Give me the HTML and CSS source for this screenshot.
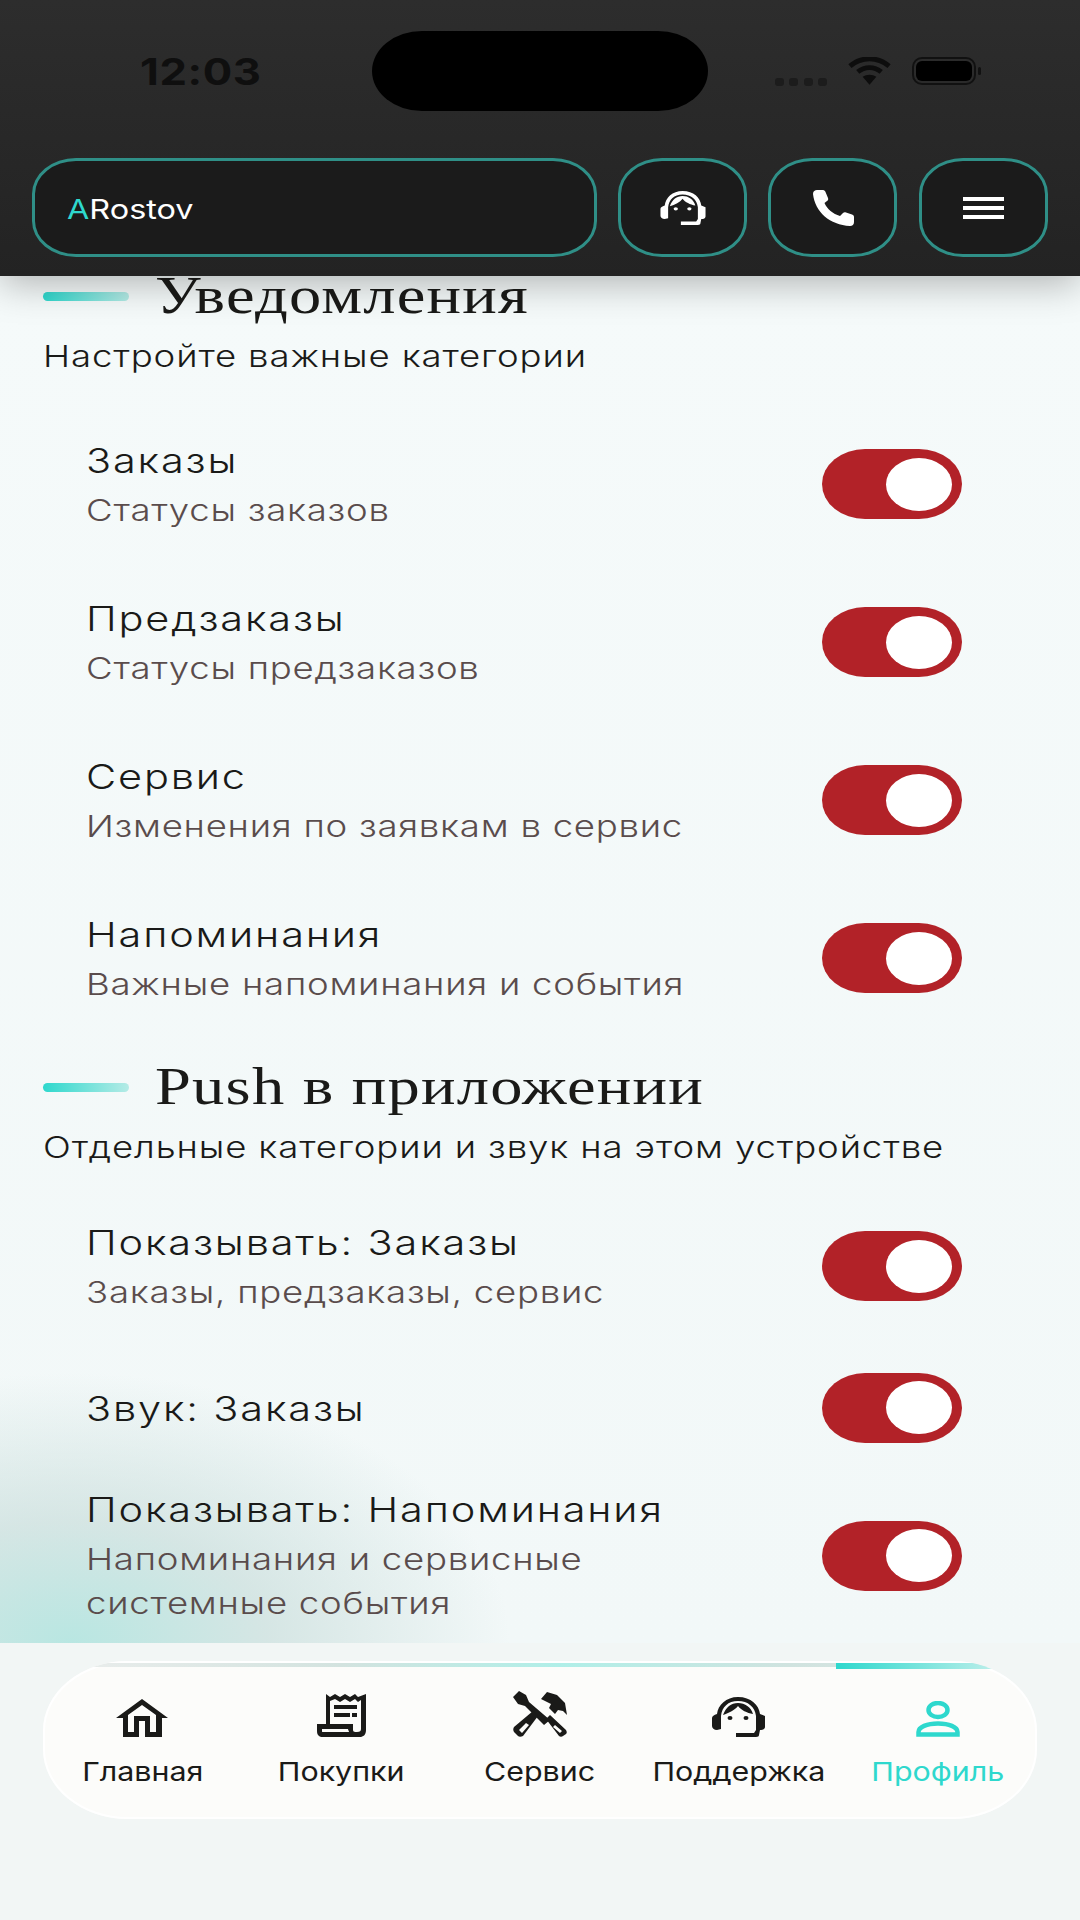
FILE: index.html
```html
<!DOCTYPE html>
<html lang="ru">
<head>
    <meta charset="UTF-8">
    <meta name="viewport" content="width=device-width, initial-scale=1.0">
    <title>Профиль | Уведомления</title>
    <link rel="stylesheet" href="styles.css">
</head>
<body>
    <div class="app">
        <!-- Шапка -->
        <header class="top">
            <div class="status">
                <span class="time">12:03</span>
                <div class="island"></div>
                <div class="status-icons">
                    <svg class="signal" width="52" height="8" viewBox="0 0 52 8"><g fill="#1c1c1c"><rect x="0" y="0" width="9" height="8" rx="3"/><rect x="14" y="0" width="9" height="8" rx="3"/><rect x="29" y="0" width="9" height="8" rx="3"/><rect x="43" y="0" width="9" height="8" rx="3"/></g></svg>
                    <svg width="45" height="28" viewBox="0 0 46 28"><g fill="none" stroke="#0d0d0d" stroke-width="5"><path d="M3 9 C15 -1 31 -1 43 9"/><path d="M11 15 C18 9 28 9 35 15"/></g><path d="M16 20 C20 17 26 17 30 20 L23 28 Z" fill="#0d0d0d"/></svg>
                    <svg width="72" height="28" viewBox="0 0 72 28"><rect x="1" y="1" width="62" height="26" rx="9" fill="none" stroke="#111" stroke-width="2"/><rect x="4" y="4" width="56" height="20" rx="6" fill="#000"/><rect x="66" y="10" width="3" height="8" rx="1.5" fill="#111"/></svg>
                </div>
            </div>
            <div class="toolbar">
                <div class="brand-box"><span class="brand"><span class="brand-a">A</span>Rostov</span></div>
                <button class="tool-btn">
                    <svg width="46" height="34" viewBox="0 0 53 40"><use href="#ic-support"/></svg>
                </button>
                <button class="tool-btn">
                    <svg width="42" height="36" viewBox="0 0 42 36"><path d="M1 4 C1 1 3 0 5 0 L11 0 C12.500 0 13 1 13.500 2 L16 8 C16.500 9.500 16 10.500 15 11 L12.500 13 C15 19 21 24 28 26 L31 23 C32 22 33 22 34 22.500 L40 24.500 C41.500 25 42 26 42 27 L42 32 C42 34.500 40.500 36 38 36 C18 35 3 22 1 4 Z" fill="#fff"/></svg>
                </button>
                <button class="tool-btn burger">
                    <i></i><i></i><i></i>
                </button>
            </div>
        </header>

        <main class="content">
            <section class="group">
                <div class="group-head">
                    <span class="dash"></span>
                    <h2>Уведомления</h2>
                </div>
                <p class="group-sub">Настройте важные категории</p>

                <div class="rows rows-first">
                    <div class="row row-std">
                        <div class="row-text">
                            <div class="row-title">Заказы</div>
                            <div class="row-sub">Статусы заказов</div>
                        </div>
                        <span class="toggle"><span class="knob"></span></span>
                    </div>
                    <div class="row row-std">
                        <div class="row-text">
                            <div class="row-title">Предзаказы</div>
                            <div class="row-sub">Статусы предзаказов</div>
                        </div>
                        <span class="toggle"><span class="knob"></span></span>
                    </div>
                    <div class="row row-std">
                        <div class="row-text">
                            <div class="row-title">Сервис</div>
                            <div class="row-sub">Изменения по заявкам в сервис</div>
                        </div>
                        <span class="toggle"><span class="knob"></span></span>
                    </div>
                    <div class="row row-std">
                        <div class="row-text">
                            <div class="row-title">Напоминания</div>
                            <div class="row-sub">Важные напоминания и события</div>
                        </div>
                        <span class="toggle"><span class="knob"></span></span>
                    </div>
                </div>
            </section>

            <section class="group group-push">
                <div class="group-head">
                    <span class="dash"></span>
                    <h2>Push в приложении</h2>
                </div>
                <p class="group-sub">Отдельные категории и звук на этом устройстве</p>

                <div class="rows">
                    <div class="row row-std">
                        <div class="row-text">
                            <div class="row-title">Показывать: Заказы</div>
                            <div class="row-sub">Заказы, предзаказы, сервис</div>
                        </div>
                        <span class="toggle"><span class="knob"></span></span>
                    </div>
                    <div class="row row-short">
                        <div class="row-text">
                            <div class="row-title">Звук: Заказы</div>
                        </div>
                        <span class="toggle"><span class="knob"></span></span>
                    </div>
                    <div class="row row-tall">
                        <div class="row-text">
                            <div class="row-title">Показывать: Напоминания</div>
                            <div class="row-sub">Напоминания и сервисные<br>системные события</div>
                        </div>
                        <span class="toggle"><span class="knob"></span></span>
                    </div>
                </div>
            </section>
        </main>

        <!-- Нижнее меню -->
        <div class="bottom">
            <nav class="tabbar">
                <span class="tab-line"></span>
                <span class="tab-line-active"></span>
                <a class="tab">
                    <svg width="52" height="38" viewBox="0 0 52 38"><path d="M26 0 L52 19 L46 19 L46 38 L29 38 L29 22 L23 22 L23 38 L7 38 L7 19 L0 19 Z M26 6 L12 16 L12 33 L18 33 L18 17 L34 17 L34 33 L40 33 L40 16 Z" fill="#1a1a18" fill-rule="evenodd"/></svg>
                    <span class="tab-label">Главная</span>
                </a>
                <a class="tab">
                    <svg width="49" height="43" viewBox="0 0 49 43"><path d="M9 0 L13 3 L18 0 L23 3 L28 0 L33 3 L38 0 L41 3 L49 0 L49 36 C49 41 46 43 43 43 L6 43 C2 43 0 41 0 37 L0 30 L9 30 Z M13 7 L13 30 L36 30 L36 36 C36 38 38 38 40 38 C43 38 44 37 44 35 L44 6 L41 8 L38 5 L33 8 L28 5 L23 8 L18 5 Z M5 35 L5 37 C5 38 5 38 7 38 L32 38 C32 37 31 36 31 35 Z" fill="#1a1a18" fill-rule="evenodd"/><path d="M17 11 H40 V15 H17 Z M17 19 H33 V23 H17 Z M35 19 H40 V23 H35 Z" fill="#1a1a18"/></svg>
                    <span class="tab-label">Покупки</span>
                </a>
                <a class="tab">
                    <svg width="54" height="46" viewBox="0 0 54 46"><g fill="#1a1a18"><path d="M0 6 L6 0 L13 4 L16 11 L37 29 L31 34 L12 15 L5 13 Z"/><path d="M20 20 L25 25 L10 45 C8 46 6 46 5 45 L1 41 C0 39 0 38 1 36 Z M6 39 L9 42 L16 34 L13 32 Z" fill-rule="evenodd"/><path d="M28 8 L34 1 L44 4 L52 12 L54 24 L50 20 L45 19 L42 23 L36 17 L38 13 Z"/><path d="M33 28 L37 24 L53 39 C54 41 54 42 53 43 L50 45 C49 46 47 46 46 45 Z M42 34 L40 36 L47 42 L49 40 Z" fill-rule="evenodd"/></g></svg>
                    <span class="tab-label">Сервис</span>
                </a>
                <a class="tab">
                    <svg width="53" height="40" viewBox="0 0 53 40"><use href="#ic-support"/></svg>
                    <span class="tab-label">Поддержка</span>
                </a>
                <a class="tab active">
                    <svg width="44" height="36" viewBox="0 0 44 36"><g fill="none" stroke="#2ed8cd" stroke-width="4.500"><ellipse cx="22" cy="9" rx="9.500" ry="7"/><path d="M2.500 33.500 L41.500 33.500 L41.500 31 C41.500 26 33 22.500 22 22.500 C11 22.500 2.500 26 2.500 31 Z"/></g></svg>
                    <span class="tab-label">Профиль</span>
                </a>
            </nav>
        </div>
    </div>

    <svg width="0" height="0" class="defs">
        <defs>
            <g id="ic-support" fill="currentColor">
                <path d="M26 0 C39 0 47 8 48 17 L53 19 L53 30 C53 32 51 33 48 33 L47 38 C47 39 46 40 44 40 L24 40 L24 36 L42 36 L44 33 L44 19 C43 10 36 4 26 4 C16 4 10 10 9 19 L9 32 L5 33 C2 33 0 31 0 29 L0 21 C0 19 2 18 5 17 C6 8 14 0 26 0 Z"/>
                <path d="M26 9 C29 13 35 16 41 17 C39 10 33 6 26 6 C19 6 14 10 11 18 C17 16 23 13 26 9 Z"/>
                <ellipse cx="18" cy="21" rx="2.500" ry="2"/>
                <ellipse cx="34" cy="21" rx="2.500" ry="2"/>
            </g>
        </defs>
    </svg>
</body>
</html>
```

FILE: styles.css
```css
* {
    box-sizing: border-box;
    margin: 0;
    padding: 0;
}

body {
    font-family: 'Inter', 'Liberation Sans', sans-serif;
    background: #f2f6f5;
}

.app {
    width: 1080px;
    height: 1920px;
    display: flex;
    flex-direction: column;
    overflow: hidden;
}

/* шапка */
.top {
    height: 276px;
    flex: none;
    background: linear-gradient(180deg, #2d2d2d 0%, #232323 100%);
    box-shadow: 0 8px 36px rgba(0, 0, 0, 0.28);
    position: relative;
    z-index: 2;
    padding-top: 31px;
}

.status {
    height: 80px;
    display: flex;
    align-items: center;
}

.time {
    width: 101px;
    margin-left: 140px;
    font-size: 37px;
    font-weight: 700;
    letter-spacing: 0.5px;
    color: #0f0f0f;
    transform: scaleX(1.18);
    transform-origin: left center;
}

.island {
    width: 336px;
    height: 80px;
    background: #000;
    border-radius: 50px / 40px;
    margin-left: 131px;
}

.status-icons {
    display: flex;
    align-items: center;
    gap: 20px;
    margin-left: 67px;
}

.signal {
    margin-top: 21px;
}

.toolbar {
    display: flex;
    gap: 21px;
    margin-top: 47px;
    padding-left: 32px;
}

.brand-box,
.tool-btn {
    height: 99px;
    background: #1b1b1b;
    border: 3px solid #2f8f87;
    border-radius: 44px / 36px;
    display: flex;
    align-items: center;
}

.brand-box {
    width: 565px;
    padding: 3px 0 0 32px;
}

.brand {
    font-size: 27px;
    font-weight: 400;
    color: #fff;
    transform: scaleX(1.2);
    transform-origin: left center;
}

.brand-a {
    color: #2ed8cd;
}

.tool-btn {
    width: 129px;
    justify-content: center;
    color: #fff;
}

.burger {
    flex-direction: column;
    gap: 5px;
    margin-left: 1px;
}

.burger i {
    display: block;
    width: 41px;
    height: 4px;
    background: #fff;
}

/* контент */
.content {
    height: 1367px;
    flex: none;
    padding: 0 43px;
    background:
        radial-gradient(ellipse 440px 270px at 70px 100%, rgba(170, 226, 220, 0.8) 0%, rgba(190, 215, 212, 0.55) 45%, rgba(220, 230, 229, 0) 100%),
        linear-gradient(180deg, #f5fafa 0%, #f2f8f8 100%);
}

.group-head {
    display: flex;
    align-items: center;
    gap: 26px;
}

.group-push {
    margin-top: 30px;
}

.dash {
    width: 86px;
    height: 9px;
    border-radius: 5px;
    background: linear-gradient(90deg, #2ed8cd 0%, #b5ebe6 100%);
    flex: none;
}

h2 {
    font-family: 'Liberation Serif', serif;
    font-size: 52px;
    font-weight: 400;
    letter-spacing: 1px;
    line-height: 40px;
    color: #1a1a18;
    transform: scaleX(1.24);
    transform-origin: left center;
}

.group-sub {
    font-size: 30px;
    line-height: 40px;
    letter-spacing: 0.7px;
    color: #1a1a18;
    font-weight: 300;
    margin-top: 20px;
    transform: scaleX(1.22);
    transform-origin: left center;
}

.rows {
    margin-top: 20px;
}

.rows-first {
    margin-top: 29px;
}

.row {
    display: flex;
    align-items: center;
    justify-content: space-between;
    padding: 0 75px 0 43px;
}

.row-std {
    height: 158px;
}

.row-short {
    height: 125px;
}

.row-tall {
    height: 171px;
}

.row-text {
    padding-top: 2px;
}

.row-title {
    font-size: 34px;
    line-height: 44px;
    letter-spacing: 1.5px;
    font-weight: 300;
    color: #1a1a18;
    transform: scaleX(1.22);
    transform-origin: left center;
}

.row-sub {
    font-size: 30px;
    line-height: 44px;
    letter-spacing: 0.6px;
    font-weight: 300;
    color: #5a4c4c;
    margin-top: 5px;
    transform: scaleX(1.22);
    transform-origin: left center;
}

.toggle {
    width: 140px;
    height: 70px;
    border-radius: 43px / 35px;
    background: #b22228;
    display: flex;
    align-items: center;
    justify-content: flex-end;
    padding-right: 10px;
    flex: none;
}

.knob {
    width: 66px;
    height: 53px;
    border-radius: 50%;
    background: #fff;
}

/* нижнее меню */
.bottom {
    flex: 1;
    padding: 18px 43px 0;
    background: #f2f6f5;
}

.tabbar {
    height: 158px;
    background: #fcfcfa;
    border-radius: 85px / 70px;
    display: grid;
    grid-template-columns: repeat(5, 1fr);
    position: relative;
    overflow: hidden;
    box-shadow: inset 0 0 0 2px rgba(255, 255, 255, 0.9);
}

.tab-line {
    position: absolute;
    left: 0;
    right: 0;
    top: 2px;
    height: 4px;
    background: linear-gradient(90deg, #eceeed 0%, #d3e3df 30%, #b0efe8 52%, #d0e3df 75%, #e2e7e5 100%);
}

.tab-line-active {
    position: absolute;
    left: 793px;
    top: 2px;
    width: 170px;
    height: 6px;
    background: linear-gradient(90deg, #2ed8cd 0%, #c5f0ec 100%);
}

.tab {
    display: flex;
    flex-direction: column;
    align-items: center;
    justify-content: flex-end;
    gap: 19px;
    padding-bottom: 31px;
    font-size: 26px;
    line-height: 32px;
    color: #1a1a18;
}

.tab-label {
    transform: scaleX(1.17);
}

.tab.active {
    color: #2ed8cd;
}

.defs {
    position: absolute;
}
```
